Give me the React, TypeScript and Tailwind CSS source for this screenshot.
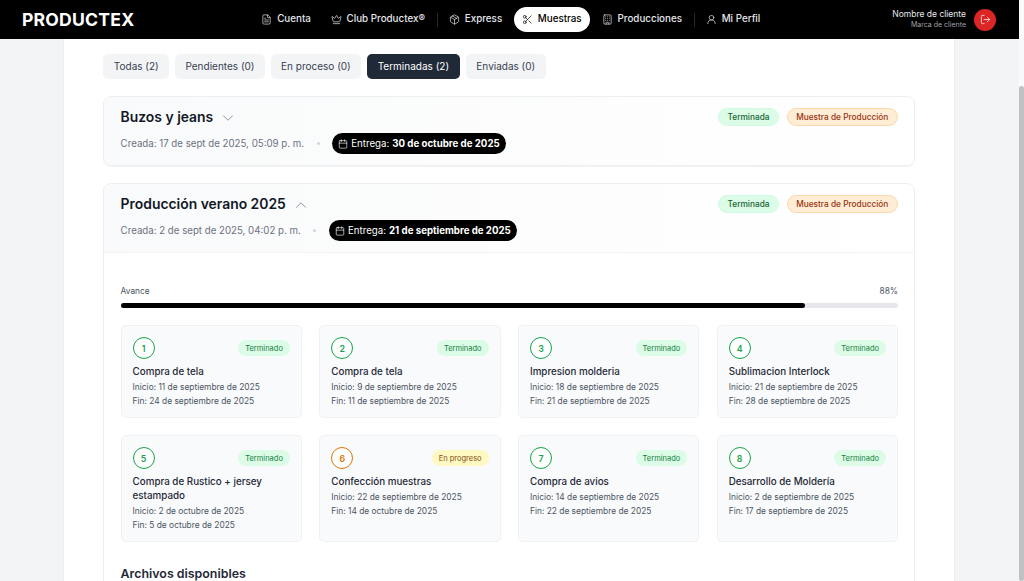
import { Building, Calendar, ChevronDown, ChevronUp, Crown, FileText, LogOut, Package, Scissors, UserRound } from "lucide-react";

const navLinks = [
  { label: "Cuenta", icon: FileText, w: "w-[66px]" },
  { label: "Club Productex®", icon: Crown, w: "w-[110.5px]", divider: true },
  { label: "Express", icon: Package, w: "w-[69px]" },
  { label: "Muestras", icon: Scissors, w: "w-[76.5px]", active: true },
  { label: "Producciones", icon: Building, w: "w-[96.5px]", divider: true },
  { label: "Mi Perfil", icon: UserRound, w: "w-[70px]" },
];

const tabs = [
  { label: "Todas (2)", w: "w-[66px]" },
  { label: "Pendientes (0)", w: "w-[90px]" },
  { label: "En proceso (0)", w: "w-[90.5px]" },
  { label: "Terminadas (2)", w: "w-[93px]", active: true },
  { label: "Enviadas (0)", w: "w-[80.5px]" },
];

const steps: Step[] = [
  { n: 1, title: "Compra de tela", start: "11 de septiembre de 2025", end: "24 de septiembre de 2025" },
  { n: 2, title: "Compra de tela", start: "9 de septiembre de 2025", end: "11 de septiembre de 2025" },
  { n: 3, title: "Impresion molderia", start: "18 de septiembre de 2025", end: "21 de septiembre de 2025" },
  { n: 4, title: "Sublimacion Interlock", start: "21 de septiembre de 2025", end: "28 de septiembre de 2025" },
  { n: 5, title: "Compra de Rustico + jersey estampado", start: "2 de octubre de 2025", end: "5 de octubre de 2025" },
  { n: 6, title: "Confección muestras", start: "22 de septiembre de 2025", end: "14 de octubre de 2025", progress: true },
  { n: 7, title: "Compra de avios", start: "14 de septiembre de 2025", end: "22 de septiembre de 2025" },
  { n: 8, title: "Desarrollo de Moldería", start: "2 de septiembre de 2025", end: "17 de septiembre de 2025" },
];

type Step = { n: number; title: string; start: string; end: string; progress?: boolean };

function Header() {
  return (
    <header className="h-[39px] shrink-0 bg-black flex items-center text-white">
      <div className="w-[253px] pl-[22px] text-[17.6px] leading-none font-bold tracking-[0.2px] shrink-0">PRODUCTEX</div>
      <nav className="flex items-center gap-[3.5px]">
        {navLinks.map((link) => (
          <div key={link.label} className="flex items-center gap-[3.5px]">
            <a
              className={`${link.w} h-[25px] flex items-center justify-center gap-[5px] rounded-full text-[9.8px] font-medium ${
                link.active ? "bg-white text-black" : "text-[#e5e7eb]"
              }`}
            >
              <link.icon size={11} strokeWidth={1.5} />
              {link.label}
            </a>
            {link.divider && <span className="w-px h-[14px] bg-[#27272a]" />}
          </div>
        ))}
      </nav>
      <div className="ml-auto flex items-center gap-[8px] pr-[22.5px]">
        <div className="text-right pb-[2px]">
          <div className="text-[8.5px] leading-[12px] text-[#e5e7eb]">Nombre de cliente</div>
          <div className="text-[7px] leading-[10px] text-[#a1a1aa]">Marca de cliente</div>
        </div>
        <div className="w-[22px] h-[22px] rounded-full bg-[#dc2626] flex items-center justify-center">
          <LogOut size={11} strokeWidth={1.6} />
        </div>
      </div>
    </header>
  );
}

function Badges() {
  return (
    <div className="flex items-start gap-[7.5px]">
      <span className="h-[18px] w-[61px] flex items-center justify-center rounded-full bg-[#dcfce7] border border-[#d1fae5] text-[8.3px] font-medium text-[#166534]">
        Terminada
      </span>
      <span className="h-[18px] w-[111.5px] flex items-center justify-center rounded-full bg-[#ffedd5] border border-[#fed7aa] text-[8.3px] font-medium text-[#9a3412]">
        Muestra de Producción
      </span>
    </div>
  );
}

function OrderHead({ title, created, due, open }: { title: string; created: string; due: string; open?: boolean }) {
  const Chevron = open ? ChevronUp : ChevronDown;
  return (
    <div className={`px-[16.3px] pt-[10.5px] flex justify-between bg-gradient-to-r from-[#f9fafb] to-white ${open ? "h-[69px] border-b border-[#f3f4f6]" : "h-[68px]"}`}>
      <div>
        <div className="flex items-center gap-[6px] h-[20px]">
          <h2 className="text-[13.9px] font-semibold text-[#111827]">{title}</h2>
          <Chevron size={18} strokeWidth={1} className="text-[#6b7280]" />
        </div>
        <div className="mt-[5.5px] flex items-center text-[9.7px] text-[#6b7280]">
          <span>{created}</span>
          <span className="w-[3px] h-[3px] rounded-full bg-[#d1d5db] mx-[12.6px]" />
          <span className="h-[21px] px-[6px] rounded-full bg-black text-white flex items-center gap-[3px]">
            <Calendar size={10} strokeWidth={1.5} />
            Entrega: <strong className="font-bold">{due}</strong>
          </span>
        </div>
      </div>
      <Badges />
    </div>
  );
}

function StepCard({ step }: { step: Step }) {
  const color = step.progress ? "border-[#d97706] text-[#d97706]" : "border-[#16a34a] text-[#16a34a]";
  return (
    <div className="rounded-[5px] border border-[#f0f1f4] bg-[#f9fafb] px-[11px] pt-[11px] pb-[9px]">
      <div className="flex items-center justify-between">
        <span className={`w-[22px] h-[22px] rounded-full border flex items-center justify-center text-[8.8px] font-semibold bg-white ${color}`}>
          {step.n}
        </span>
        <span
          className={`h-[16px] px-[7px] flex items-center rounded-full text-[7.5px] ${
            step.progress ? "bg-[#fef9c3] text-[#854d0e]" : "bg-[#dcfce7] text-[#15803d]"
          }`}
        >
          {step.progress ? "En progreso" : "Terminado"}
        </span>
      </div>
      <h3 className="mt-[5.7px] text-[9.8px] leading-[14px] font-medium text-[#1f2937]">{step.title}</h3>
      <p className="text-[8.4px] leading-[14px] mt-[1px] text-[#4b5563]">Inicio: {step.start}</p>
      <p className="text-[8.4px] leading-[14px] text-[#4b5563]">Fin: {step.end}</p>
    </div>
  );
}

export default function App() {
  return (
    <div className="w-[1024px] h-[581px] overflow-hidden flex bg-[#f3f4f6] font-['Inter',sans-serif]">
      <div className="w-[1018.5px] shrink-0 flex flex-col">
        <Header />
        <main className="flex-1 ml-[63.3px] w-[892px] bg-white border-x border-[#eceef1] px-[39px] pt-[15px] overflow-hidden">
          <div className="flex gap-[5.7px]">
            {tabs.map((tab) => (
              <button
                key={tab.label}
                className={`${tab.w} h-[25px] rounded-[5px] text-[10px] ${
                  tab.active ? "bg-[#1f2937] text-white" : "bg-[#f3f4f6] text-[#374151]"
                }`}
              >
                {tab.label}
              </button>
            ))}
          </div>

          <section className="mt-[17.3px] rounded-[8px] border border-[#eceef1] shadow-[0_1px_1px_rgba(0,0,0,0.05)] overflow-hidden">
            <OrderHead title="Buzos y jeans" created="Creada: 17 de sept de 2025, 05:09 p. m." due="30 de octubre de 2025" />
          </section>

          <section className="mt-[17px] rounded-t-[8px] border border-[#eceef1] overflow-hidden h-[500px]">
            <OrderHead open title="Producción verano 2025" created="Creada: 2 de sept de 2025, 04:02 p. m." due="21 de septiembre de 2025" />
            <div className="px-[16.3px] pt-[32px]">
              <div className="flex justify-between text-[8.3px] leading-[12px] text-[#4b5563]">
                <span>Avance</span>
                <span>88%</span>
              </div>
              <div className="mt-[6px] h-[5px] rounded-full bg-[#e5e7eb]">
                <div className="h-full w-[88%] rounded-full bg-black" />
              </div>
              <div className="mt-[17px] grid grid-cols-4 gap-x-[17.4px] gap-y-[17.3px]">
                {steps.map((step) => (
                  <StepCard key={step.n} step={step} />
                ))}
              </div>
              <h2 className="mt-[23px] text-[12.4px] font-semibold text-[#1f2937]">Archivos disponibles</h2>
            </div>
          </section>
        </main>
      </div>
      <div className="flex-1 bg-[#fafafa]">
        <div className="mt-[86px] h-[495px] bg-[#c1c1c1] rounded-full" />
      </div>
    </div>
  );
}
